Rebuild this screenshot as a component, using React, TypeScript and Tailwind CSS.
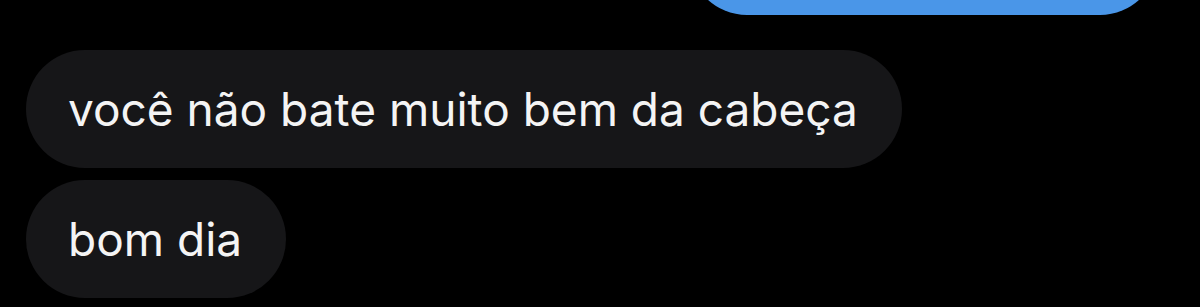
import React from 'react';

type Message = { id: number; text: string };

const received: Message[] = [
    { id: 1, text: 'você não bate muito bem da cabeça' },
    { id: 2, text: 'bom dia' },
];

export default function App() {
    return (
        <div
            className="w-[1200px] h-[307px] overflow-hidden bg-black"
            style={{ fontFamily: 'Inter, "Noto Sans", sans-serif' }}
        >
            {/* sent bubble, mostly scrolled out of view */}
            <div className="flex justify-end pr-[42px]">
                <div className="w-[469px] h-[118px] mt-[-103px] rounded-[58px] bg-[#4a96e8]" />
            </div>

            <div className="flex flex-col items-start gap-[12px] pl-[26px] pt-[35px]">
                {received.map((m) => (
                    <div
                        key={m.id}
                        className="flex items-center h-[118px] pl-[42px] pr-[44px] rounded-[59px] bg-[#161618]"
                    >
                        <span className="text-[46px] leading-none text-[#f4f4f4] whitespace-nowrap">
                            {m.text}
                        </span>
                    </div>
                ))}
            </div>
        </div>
    );
}
